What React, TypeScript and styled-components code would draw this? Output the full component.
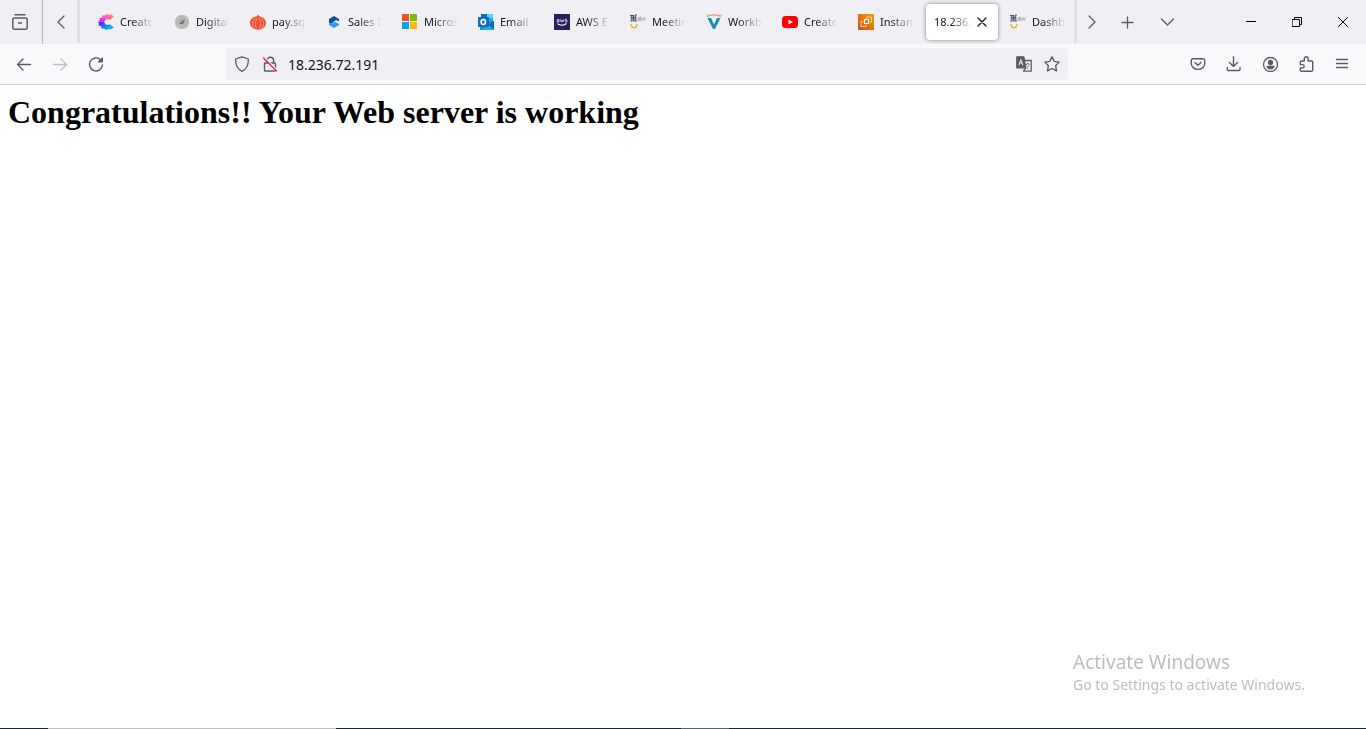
import React from "react";
import styled, { createGlobalStyle } from "styled-components";

const GlobalStyle = createGlobalStyle`
  * { box-sizing: border-box; }
  body { margin: 0; background: #ffffff; }
  button, input { font: inherit; color: inherit; }
`;

const uiFont = `"Segoe UI", "Noto Sans", sans-serif`;

const Browser = styled.div`
  display: flex;
  flex-direction: column;
  min-height: 100vh;
  font-family: ${uiFont};
  color: #15141a;
`;

const TabStrip = styled.header`
  display: flex;
  align-items: stretch;
  height: 44px;
  background: #f0eff4;
`;

const IconButton = styled.button<{ $width?: number; $color?: string }>`
  display: flex;
  align-items: center;
  justify-content: center;
  flex: none;
  width: ${(p) => p.$width ?? 36}px;
  padding: 0;
  border: 0;
  background: transparent;
  color: ${(p) => p.$color ?? "#5b5b66"};
`;

const ViewArea = styled.div`
  display: flex;
  flex: none;
  width: 43px;
  padding-right: 2px;
  border-right: 1px solid #b9b8c0;
`;

const ScrollEdge = styled.div`
  flex: none;
  width: 3px;
  height: 43px;
  background: linear-gradient(to right, #e8e7ec, #dad9de, #e8e7ec);
`;

const TabList = styled.nav`
  display: flex;
  flex: none;
  padding-left: 8px;
  margin-right: -2px;
`;

const TabItem = styled.div<{ $active?: boolean }>`
  display: flex;
  align-items: center;
  width: 72px;
  height: 36px;
  margin: 4px 2px;
  padding: 0 8px;
  border-radius: 4px;
  background: ${(p) => (p.$active ? "#ffffff" : "transparent")};
  box-shadow: ${(p) => (p.$active ? "0 0 4px rgba(0, 0, 0, 0.45)" : "none")};
`;

const TabButton = styled.button`
  display: flex;
  align-items: center;
  flex: 1;
  gap: 6px;
  min-width: 0;
  padding: 0;
  border: 0;
  background: transparent;
  text-align: left;
`;

const TabLabel = styled.span`
  flex: 1;
  min-width: 0;
  overflow: hidden;
  font-size: 11px;
  line-height: 16px;
  white-space: nowrap;
  mask-image: linear-gradient(to left, transparent, #000 24px);
`;

const Spring = styled.div`
  flex: 1;
`;

const Toolbar = styled.div`
  display: flex;
  height: 41px;
  padding: 0 6px;
  border-bottom: 1px solid #cccccf;
  background: #f9f9fb;
`;

const AddressBar = styled.form`
  display: flex;
  align-items: stretch;
  flex: 1;
  min-width: 0;
  margin: 4px 112px;
  padding: 0 2px;
  border-radius: 4px;
  background: #f0eff4;
`;

const AddressInput = styled.input`
  flex: 1;
  min-width: 0;
  padding: 0 4px;
  border: 0;
  outline: 0;
  background: transparent;
  font-size: 14px;
`;

const Page = styled.main`
  flex: 1;
  padding: 8px;
`;

const Heading = styled.h1`
  margin: 0;
  color: #000000;
  font: bold 32px/39px "Times New Roman", "Liberation Serif", serif;
`;

const Watermark = styled.aside`
  position: fixed;
  right: 57px;
  bottom: 34px;
  width: 236px;
  color: #bdbdbd;
  white-space: nowrap;
`;

const WatermarkTitle = styled.div`
  font-size: 19px;
  line-height: 26px;
`;

const WatermarkText = styled.div`
  font-size: 14px;
  line-height: 20px;
`;

const TaskbarEdge = styled.footer`
  display: flex;
  height: 1px;
  background: #15293c;
`;

const TaskbarItem = styled.span<{ $start: number; $width: number; $color: string }>`
  width: ${(p) => p.$width}px;
  margin-left: ${(p) => p.$start}px;
  background: ${(p) => p.$color};
`;

function Glyph({ children, size = 16, width = 1.3 }: { children: React.ReactNode; size?: number; width?: number }) {
  return (
    <svg width={size} height={size} viewBox={`0 0 ${size} ${size}`} fill="none" stroke="currentColor"
      strokeWidth={width} strokeLinecap="round" strokeLinejoin="round" aria-hidden="true">
      {children}
    </svg>
  );
}

function Favicon({ children }: { children: React.ReactNode }) {
  return <svg width="16" height="16" viewBox="0 0 16 16" fill="none" aria-hidden="true">{children}</svg>;
}

const rays = Array.from({ length: 20 }, (_, i) => (i * Math.PI) / 10);

const ElbcIcon = () => (
  <Favicon>
    <path d="M.5 1h6v6.500h-6z" fill="#a3abb3" />
    <path d="M0 1.500h3M5 1h2M1 4h5M.5 7h2M4.500 7H7M3.500 1v6M1.500 2.500v3M5.500 2.500v3" stroke="#4b5866" strokeWidth="1" />
    <path d="M8 3.500h1.500v3H8zM8 5h2M10.500 2.500v4h1.200V4.500M13 3v3.500M12.300 4.500H14M15.500 3.700H14.700v2.800h.8" stroke="#b3b7bf" strokeWidth="1" />
    <path d="M.8 9.800c.4 2.700 1.700 4 3.200 4s2.800-1.300 3.200-4" stroke="#f5a83c" strokeWidth="1.400" />
  </Favicon>
);

const icons = {
  creately: (
    <Favicon>
      <defs>
        <linearGradient id="cTop" x1="0" y1="1" x2="1" y2="0">
          <stop offset="0" stopColor="#a800ff" /><stop offset=".45" stopColor="#ff55d8" /><stop offset="1" stopColor="#ffa62b" />
        </linearGradient>
        <linearGradient id="cLow" x1="0" y1="0" x2="1" y2="1">
          <stop offset="0" stopColor="#8a00ff" /><stop offset=".45" stopColor="#1778ff" /><stop offset="1" stopColor="#00f0c8" />
        </linearGradient>
      </defs>
      <path d="M0 7.500 2 6 1.500 4 4 3.500 4.500 1.300 7 1.500 8.500 0l2 .8 3-.3 2.500 2.300-4.500 3.200C10 4.500 7 5 6.300 8z" fill="url(#cTop)" />
      <path d="M0 8h6.300c.5 3 3.700 3.700 5.200 2.300l4.500 3-3 2.200-2.500-.3L8 16l-2-1.300-2.500-.2-.5-2.300-2.500-.7.500-2z" fill="url(#cLow)" />
    </Favicon>
  ),
  digital: (
    <Favicon>
      <circle cx="8" cy="8" r="7.300" fill="#c6c6c7" />
      {rays.map((a) => (
        <path key={a} d={`M8 8L${8 + 7 * Math.cos(a)} ${8 + 7 * Math.sin(a)}`} stroke="#a2a2a4" strokeWidth=".6" />
      ))}
      <path d="M5 10l6-5-2 5z" fill="#6e6e70" />
    </Favicon>
  ),
  onion: (
    <Favicon>
      <path d="M8 .5 9.500 2.500C13 3 16 5.500 16 9s-3 6-6 6.300L8 16l-2-.7C3 15 0 12.500 0 9s3-6 6.500-6.500z" fill="#f0512f" />
      <path d="M5.500 4C1.500 7 2 12 4.500 14M7.200 4C5 7 5 12 6.700 14.500M9 4C11 7 11 12 9.500 14.500M10.700 4c4 3 3.500 8 1 10" stroke="#ffb39c" strokeWidth=".7" />
    </Favicon>
  ),
  sales: (
    <Favicon>
      <path d="M3 5 8 2l5 3v2.300L10 6 5 10l-2-1.500z" fill="#0b4f9e" />
      <path d="m5 10 4-2 4 2v1l-5 3-5-3V9z" fill="#2b9bf4" />
    </Favicon>
  ),
  microsoft: (
    <Favicon>
      <path d="M0 0h7v7H0z" fill="#f25022" /><path d="M8 0h7v7H8z" fill="#7fba00" />
      <path d="M0 8h7v7H0z" fill="#00a4ef" /><path d="M8 8h7v7H8z" fill="#ffb900" />
    </Favicon>
  ),
  outlook: (
    <Favicon>
      <path d="M3 0h12v8H3z" fill="#28a8ea" /><path d="M9 0h6v4H9z" fill="#50d9ff" /><path d="M3 0h6v4H3z" fill="#0a6fc2" />
      <path d="M2 7h14v9H2z" fill="#1490df" /><path d="m16 7-8 5 8 4z" fill="#0f68b5" /><path d="m3 16 8-5 5 5z" fill="#28a8ea" />
      <rect y="3" width="11" height="10" rx="1" fill="#0f6cbd" />
      <ellipse cx="5.300" cy="8" rx="2.200" ry="2.500" stroke="#fff" strokeWidth="1.500" />
    </Favicon>
  ),
  aws: (
    <Favicon>
      <path d="M0 0h16v16H0z" fill="#27215f" />
      <path d="M3 5.500h2V8H3V6.800h2M6.500 5.300l.7 2.700.9-2 .9 2 .7-2.700M13 5.300h-1.800v1.300H13V8h-2" stroke="#d9d8e6" strokeWidth=".8" />
      <path d="M3.500 9.800c2.700 1.700 6.300 1.700 9-.3" stroke="#fff" strokeWidth="1.100" />
    </Favicon>
  ),
  elbc: <ElbcIcon />,
  workbench: (
    <Favicon>
      <path d="M1 2.500C5 .3 11 .3 15 2.500" stroke="#ef8c72" strokeWidth="1.200" /><path d="M0 1h3M13 1h3" stroke="#91c9d5" />
      <path d="M1.500 4H5l3 6.500L11 4h3.500L9 15H7z" fill="#168db5" />
    </Favicon>
  ),
  youtube: (
    <Favicon>
      <rect y="2" width="16" height="12" rx="3.500" fill="#ff0000" /><path d="m6.500 5.500 4.500 2.500-4.500 2.500z" fill="#fff" />
    </Favicon>
  ),
  ec2: (
    <Favicon>
      <defs><linearGradient id="ec2" x1="0" y1="1" x2="1" y2="0"><stop stopColor="#c8511b" /><stop offset="1" stopColor="#f90" /></linearGradient></defs>
      <path d="M0 0h16v16H0z" fill="url(#ec2)" />
      <path d="M6.500 5.500h4v4h-4z" stroke="#fff" strokeWidth="1.200" />
      <path d="M5 7.500H3v5h5v-2M8.500 5V3h5v5H11" stroke="#ffd9ae" strokeWidth=".9" />
    </Favicon>
  ),
};

type Tab = { title: string; icon?: keyof typeof icons; active?: boolean };

const tabs: Tab[] = [
  { title: "Create", icon: "creately" },
  { title: "Digital", icon: "digital" },
  { title: "pay.sq", icon: "onion" },
  { title: "Sales I", icon: "sales" },
  { title: "Micros", icon: "microsoft" },
  { title: "Email", icon: "outlook" },
  { title: "AWS E", icon: "aws" },
  { title: "Meetin", icon: "elbc" },
  { title: "Workb", icon: "workbench" },
  { title: "Create", icon: "youtube" },
  { title: "Instan", icon: "ec2" },
  { title: "18.236.7", active: true },
  { title: "Dashb", icon: "elbc" },
];

export default function App() {
  return (
    <Browser>
      <GlobalStyle />
      <TabStrip>
        <ViewArea>
          <IconButton $width={40} aria-label="Recent browsing">
            <Glyph width={1.5}><path d="M3 .8h10" /><rect x=".8" y="4" width="14.400" height="11.200" rx="2" /><path d="M6.500 9h3" /></Glyph>
          </IconButton>
        </ViewArea>
        <IconButton $width={34} aria-label="Scroll tabs left">
          <Glyph><path d="m12 2-6 6 6 6" /></Glyph>
        </IconButton>
        <ScrollEdge />
        <TabList aria-label="Open tabs">
          {tabs.map((tab, i) => (
            <TabItem key={i} $active={tab.active}>
              <TabButton aria-current={tab.active ? "page" : undefined}>
                {tab.icon && icons[tab.icon]}
                <TabLabel>{tab.title}</TabLabel>
              </TabButton>
              {tab.active && (
                <IconButton $width={16} $color="#15141a" aria-label="Close tab">
                  <Glyph><path d="m4 4 8 8M12 4l-8 8" /></Glyph>
                </IconButton>
              )}
            </TabItem>
          ))}
        </TabList>
        <ScrollEdge />
        <IconButton $width={30} aria-label="Scroll tabs right">
          <Glyph><path d="m5 2 6 6-6 6" /></Glyph>
        </IconButton>
        <IconButton $width={40} aria-label="New tab">
          <Glyph><path d="M8.500 3v11M3 8.500h11" /></Glyph>
        </IconButton>
        <IconButton $width={40} aria-label="List all tabs">
          <Glyph><path d="m2.500 5 6 6 6-6" /></Glyph>
        </IconButton>
        <Spring />
        <IconButton $width={46} $color="#000000" aria-label="Minimize">
          <Glyph size={10} width={1}><path d="M.5 4.500h9" /></Glyph>
        </IconButton>
        <IconButton $width={46} $color="#000000" aria-label="Restore">
          <Glyph size={10} width={1}><path d="M.5 2.500h7v7h-7zM2.500 2.500v-2h7v7h-2" /></Glyph>
        </IconButton>
        <IconButton $width={46} $color="#000000" aria-label="Close window">
          <Glyph size={10} width={1}><path d="m.5.5 9 9M9.500.5l-9 9" /></Glyph>
        </IconButton>
      </TabStrip>

      <Toolbar>
        <IconButton aria-label="Back"><Glyph width={1.4}><path d="M14.500 8.500H1.500M7 3 1.500 8.500 7 14" /></Glyph></IconButton>
        <IconButton aria-label="Forward" $color="#bdbdc3"><Glyph width={1.4}><path d="M1.500 8.500h13M9 3l5.500 5.500L9 14" /></Glyph></IconButton>
        <IconButton aria-label="Reload">
          <Glyph width={1.4}><path d="M12.800 4A6.500 6.500 0 1 0 14.500 9" /><path d="M14.500 2v4h-4z" fill="currentColor" strokeWidth="1" /></Glyph>
        </IconButton>
        <AddressBar onSubmit={(e) => e.preventDefault()}>
          <IconButton $width={28} type="button" aria-label="Tracking protection">
            <Glyph><path d="M8 .8 14.300 3c.3 5.500-1.300 9.800-6.300 12.300C3 12.800 1.400 8.500 1.700 3z" /></Glyph>
          </IconButton>
          <IconButton $width={28} type="button" aria-label="Connection is not secure">
            <Glyph width={1.4}>
              <path d="M5 7V4.500a3.300 3.300 0 0 1 6.600 0V7M3.500 7h9a1 1 0 0 1 1 1v6a1 1 0 0 1-1 1h-9a1 1 0 0 1-1-1V8a1 1 0 0 1 1-1z" />
              <path d="m2.500 1.500 13 13" stroke="#f0eff4" strokeWidth="1.500" /><path d="m1.500 2 13 13" stroke="#e2285e" />
            </Glyph>
          </IconButton>
          <AddressInput aria-label="Address" defaultValue="18.236.72.191" spellCheck={false} />
          <IconButton $width={28} type="button" aria-label="Translate page">
            <Glyph>
              <path d="M.8.8h7l2 11h-9z" fill="#5b5b66" />
              <path d="M8.500 4.500h6.700v10.700H7.500l2-3.200" />
              <path d="m3 9 1.800-5.500L6.700 9M3.700 7h2.500" stroke="#e6e6ea" strokeWidth="1" />
              <path d="M10.500 8.500c0-1.500 2.500-1.500 2.500 0 0 1-1.300 1-1.300 2.200M11.700 12.300v.1" strokeWidth="1" />
            </Glyph>
          </IconButton>
          <IconButton $width={28} type="button" aria-label="Bookmark page">
            <Glyph><path d="m8 .8 2.200 4.600 5 .7-3.600 3.600.9 5.200L8 12.500l-4.500 2.400.9-5.200L.8 6.100l5-.7z" /></Glyph>
          </IconButton>
        </AddressBar>
        <IconButton aria-label="Save to Pocket">
          <Glyph width={1.4}><path d="M3 2.700h10a1.700 1.700 0 0 1 1.700 1.700v3a6.700 6 0 0 1-13.400 0v-3A1.700 1.700 0 0 1 3 2.700z" /><path d="M5 6.500 8 9.300l3-2.800" /></Glyph>
        </IconButton>
        <IconButton aria-label="Downloads">
          <Glyph width={1.4}><path d="M7.500.8v9.700M3.500 6.500l4 4 4-4M1.300 11.500v2a1 1 0 0 0 1 1H13a1 1 0 0 0 1-1v-2" /></Glyph>
        </IconButton>
        <IconButton aria-label="Account">
          <Glyph><circle cx="8.500" cy="8.500" r="7" /><circle cx="8.500" cy="6.500" r="2" fill="currentColor" /><path d="M5 10.500h7c-.6 1.500-1.800 2.300-3.500 2.300S5.600 12 5 10.500z" fill="currentColor" /></Glyph>
        </IconButton>
        <IconButton aria-label="Extensions">
          <Glyph width={1.4}><path d="M6.300 5V2.700a1.900 1.900 0 0 1 3.800 0V5h3.400A1.200 1.200 0 0 1 14.700 6.200v7.800a1.200 1.200 0 0 1-1.200 1.200H3.500a1.200 1.200 0 0 1-1.200-1.200V12h2.200a1.700 1.700 0 0 0 0-3.400H2.300V6.200A1.200 1.200 0 0 1 3.500 5z" /></Glyph>
        </IconButton>
        <IconButton aria-label="Open application menu">
          <Glyph width={1.3}><path d="M2.500 3.500h11M2.500 7.500h11M2.500 11.500h11" /></Glyph>
        </IconButton>
      </Toolbar>

      <Page>
        <Heading>Congratulations!! Your Web server is working</Heading>
      </Page>

      <Watermark>
        <WatermarkTitle>Activate Windows</WatermarkTitle>
        <WatermarkText>Go to Settings to activate Windows.</WatermarkText>
      </Watermark>

      <TaskbarEdge>
        <TaskbarItem $start={48} $width={288} $color="#bfbfbf" />
        <TaskbarItem $start={345} $width={48} $color="#4f666c" />
      </TaskbarEdge>
    </Browser>
  );
}
